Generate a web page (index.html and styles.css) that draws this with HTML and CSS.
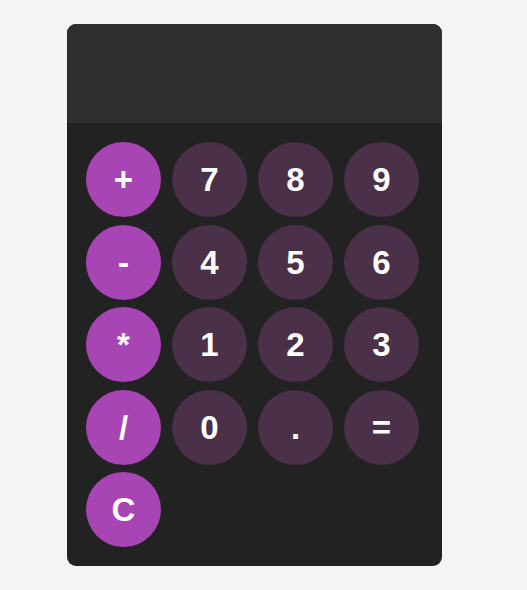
FILE: index.html
```html
<!DOCTYPE html>
<html>
<head>
<meta charset="utf-8">
<link rel="stylesheet" href="styles.css">
</head>
<body>
<div class="calc">
  <div class="display"></div>
  <div class="keys">
    <button class="key op">+</button>
    <button class="key">7</button>
    <button class="key">8</button>
    <button class="key">9</button>
    <button class="key op">-</button>
    <button class="key">4</button>
    <button class="key">5</button>
    <button class="key">6</button>
    <button class="key op">*</button>
    <button class="key">1</button>
    <button class="key">2</button>
    <button class="key">3</button>
    <button class="key op">/</button>
    <button class="key">0</button>
    <button class="key">.</button>
    <button class="key">=</button>
    <button class="key op">C</button>
  </div>
</div>
</body>
</html>
```
FILE: styles.css
```css
html, body {
  margin: 0;
  padding: 0;
  background: #f5f3f5;
}
body {
  padding: 24px 0 0 67px;
  font-family: "Liberation Sans", Arial, sans-serif;
}
.calc {
  width: 375px;
  height: 542px;
  background: #222222;
  border-radius: 9px;
  overflow: hidden;
}
.display {
  height: 99px;
  background: #2f2f2f;
}
.keys {
  display: grid;
  grid-template-columns: repeat(4, 75px);
  column-gap: 11px;
  row-gap: 7.5px;
  padding: 19px 0 0 19px;
}
.key {
  width: 75px;
  height: 75px;
  border: none;
  border-radius: 50%;
  background: #4a3048;
  color: #ffffff;
  font-family: "Liberation Sans", Arial, sans-serif;
  font-weight: bold;
  font-size: 33px;
  padding: 0;
  line-height: 75px;
}
.op {
  background: #a845b5;
}
```
